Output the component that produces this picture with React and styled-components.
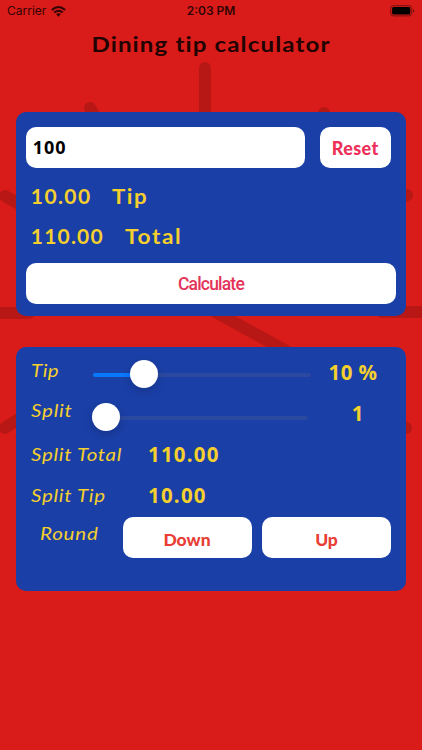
import React from "react";
import styled, { createGlobalStyle } from "styled-components";

const BLUE = "#1a3fa6";
const YELLOW = "#f4cf2e";

const GlobalStyle = createGlobalStyle`
  * { box-sizing: border-box; }
  body { margin: 0; background: #d91c19; }
`;

const Screen = styled.main`
  position: relative;
  width: 422px;
  height: 750px;
  overflow: hidden;
  background: #d91c19;
  font-family: Lato, sans-serif;
`;

const Rays = styled.svg`
  position: absolute;
  inset: 0;
  stroke: #b81815;
  stroke-width: 12;
  stroke-linecap: round;
`;

const Content = styled.div`
  position: relative;
  display: flex;
  flex-direction: column;
`;

const StatusBar = styled.header`
  display: grid;
  grid-template-columns: 1fr 1fr 1fr;
  align-items: center;
  height: 22px;
  padding: 0 7px 0 7px;
  font: 12px/22px Inter, sans-serif;
  color: #310504;
`;

const Carrier = styled.div`
  display: flex;
  align-items: center;
  gap: 5px;
`;

const Clock = styled.div`
  text-align: center;
  font-weight: 600;
`;

const BatteryIcon = styled.svg`
  justify-self: end;
`;

const Title = styled.h1`
  margin: 8px 0 0;
  height: 28px;
  text-align: center;
  font-size: 21px;
  line-height: 28px;
  font-weight: 700;
  letter-spacing: 1px;
  transform: scaleX(1.145);
  color: #210302;
  white-space: nowrap;
`;

const Panel = styled.section`
  width: 390.5px;
  height: ${(p) => p.$height}px;
  margin: ${(p) => p.$top}px 0 0 15.5px;
  border-radius: 10px;
  background: ${BLUE};
`;

const BillPanel = styled(Panel)`
  padding: 15px 10px 0 10.3px;
`;

const InputRow = styled.div`
  display: flex;
  gap: 15px;
`;

const AmountInput = styled.input`
  width: 278.8px;
  height: 41px;
  padding: 0 7px 2px;
  border: 0;
  outline: 0;
  border-radius: 10px;
  background: #fff;
  color: #000;
  font: 700 18px "Open Sans", sans-serif;
  letter-spacing: 0.9px;
`;

const Button = styled.button`
  width: ${(p) => p.$width}px;
  height: 41px;
  padding: ${(p) => p.$drop || 0}px 0 0;
  border: 0;
  border-radius: 10px;
  background: #fff;
  color: ${(p) => p.$color};
  font-family: ${(p) => p.$font || "Lato"}, sans-serif;
  font-size: ${(p) => p.$size}px;
  font-weight: ${(p) => p.$weight};
  letter-spacing: ${(p) => p.$spacing || 0}px;
`;

const Result = styled.div`
  display: flex;
  gap: ${(p) => p.$gap}px;
  height: 40px;
  padding-left: 5px;
  font-size: 21px;
  line-height: 40px;
  font-weight: 700;
  color: ${YELLOW};
`;

const ResultText = styled.span`
  letter-spacing: ${(p) => p.$spacing}px;
  transform: scaleX(${(p) => p.$stretch || 1});
  transform-origin: left;
`;

const Results = styled.div`
  height: 94.5px;
  padding-top: 8px;
`;

const SplitPanel = styled(Panel)`
  padding-top: 4px;
`;

const SliderRow = styled.div`
  display: grid;
  grid-template-columns: 62px 228px 1fr;
  height: ${(p) => p.$height}px;
  padding-left: 15px;
`;

const Label = styled.div`
  height: 38px;
  color: ${YELLOW};
  font-size: 18px;
  line-height: 38px;
  font-style: italic;
  letter-spacing: ${(p) => p.$spacing}px;
  transform: scaleX(1.14);
  transform-origin: left;
  white-space: nowrap;
`;

const RoundLabel = styled(Label)`
  height: 32px;
  line-height: 33px;
`;

const SliderTrack = styled.div`
  position: relative;
  width: ${(p) => p.$width}px;
  height: 4px;
  margin-top: ${(p) => p.$top}px;
  border-radius: 2px;
  background: #2b499f;
`;

const SliderFill = styled.div`
  width: ${(p) => p.$width}px;
  height: 4px;
  border-radius: 2px;
  background: #0878fd;
`;

const Thumb = styled.div`
  position: absolute;
  left: ${(p) => p.$left}px;
  top: -13px;
  width: 28px;
  height: 28px;
  border-radius: 50%;
  background: #fff;
  box-shadow: 0 3px 8px rgba(0, 0, 0, 0.18);
`;

const Value = styled.div`
  height: 38px;
  padding-top: ${(p) => p.$drop || 0}px;
  color: ${YELLOW};
  font: 700 20.5px/38px "Open Sans", sans-serif;
  letter-spacing: ${(p) => p.$spacing || 0}px;
  text-align: ${(p) => p.$align || "left"};
  white-space: nowrap;
`;

const SliderValue = styled(Value)`
  width: ${(p) => p.$width}px;
`;

const SplitRow = styled.div`
  display: grid;
  grid-template-columns: 117.5px 1fr;
  height: 41px;
  padding-left: 15px;
`;

const RoundRow = styled.div`
  display: grid;
  grid-template-columns: 83px 129px 139.5px;
  padding-left: 24px;
`;

const UpButton = styled(Button)`
  margin-left: 10.5px;
`;

function Backdrop() {
  return (
    <Rays width="422" height="750" viewBox="0 0 422 750">
      <path d="M205 68V180M90 108L130 180M324 113L285 180M5 196L40 216M407 195L370 215M-10 313H29M382 312H432M190 298L310 364M5 428L35 408M406 428L370 405" />
    </Rays>
  );
}

function Wifi() {
  return (
    <svg width="15" height="11" viewBox="0 0 15 11" fill="none" stroke="#310504" strokeWidth="2">
      <path d="M.8 4.1Q7.5-2 14.2 4.1M3.2 6.6Q7.5 2.8 11.8 6.6" />
      <path d="M5.1 8.1Q7.5 6.2 9.9 8.1L7.5 10.7Z" fill="#310504" stroke="none" />
    </svg>
  );
}

function Battery() {
  return (
    <BatteryIcon width="25" height="12" viewBox="0 0 25 12">
      <rect x=".7" y=".7" width="21" height="10.2" rx="2.8" fill="none" stroke="#78100e" />
      <rect x="2.1" y="2.1" width="18.2" height="7.4" rx="1.5" fill="#000" />
      <path d="M23 4v3.7q1.3-.5 1.3-1.85T23 4" fill="#78100e" />
    </BatteryIcon>
  );
}

export default function App() {
  return (
    <>
      <GlobalStyle />
      <Screen>
        <Backdrop />
        <Content>
          <StatusBar>
            <Carrier>Carrier <Wifi /></Carrier>
            <Clock>2:03 PM</Clock>
            <Battery />
          </StatusBar>
          <Title>Dining tip calculator</Title>

          <BillPanel $height={203.3} $top={54.4}>
            <InputRow>
              <AmountInput aria-label="Bill amount" defaultValue="100" />
              <Button $width={71.3} $size={18} $weight={900} $color="#ed2f59" $spacing={0.4}>Reset</Button>
            </InputRow>
            <Results>
              <Result $gap={20}>
                <ResultText $spacing={1.4}>10.00</ResultText>
                <ResultText $spacing={1.5} $stretch={1.06}>Tip</ResultText>
              </Result>
              <Result $gap={21}>
                <ResultText $spacing={1.2}>110.00</ResultText>
                <ResultText $spacing={1.5} $stretch={1.08}>Total</ResultText>
              </Result>
            </Results>
            <Button $width={370.3} $size={17.5} $weight={500} $color="#e43358" $font="Roboto" $spacing={-0.8} $drop={1}>Calculate</Button>
          </BillPanel>

          <SplitPanel $height={244.3} $top={31}>
            <SliderRow $height={40}>
              <Label $spacing={0.4}>Tip</Label>
              <SliderTrack $width={218} $top={22}>
                <SliderFill $width={50} />
                <Thumb $left={37.5} />
              </SliderTrack>
              <SliderValue $width={65} $align="center" $drop={2} $spacing={0.4}>10 %</SliderValue>
            </SliderRow>
            <SliderRow $height={44}>
              <Label $spacing={0.7}>Split</Label>
              <SliderTrack $width={215} $top={25}>
                <Thumb $left={-1} />
              </SliderTrack>
              <SliderValue $width={74} $align="center" $drop={3}>1</SliderValue>
            </SliderRow>
            <SplitRow>
              <Label $spacing={0.6}>Split Total</Label>
              <Value $spacing={1.2}>110.00</Value>
            </SplitRow>
            <SplitRow>
              <Label $spacing={0.6}>Split Tip</Label>
              <Value $spacing={1.2}>10.00</Value>
            </SplitRow>
            <RoundRow>
              <RoundLabel $spacing={0.7}>Round</RoundLabel>
              <Button $width={129} $size={17.5} $weight={900} $color="#e83e35" $drop={5}>Down</Button>
              <UpButton $width={129} $size={17.5} $weight={900} $color="#e83e35" $drop={5}>Up</UpButton>
            </RoundRow>
          </SplitPanel>
        </Content>
      </Screen>
    </>
  );
}
